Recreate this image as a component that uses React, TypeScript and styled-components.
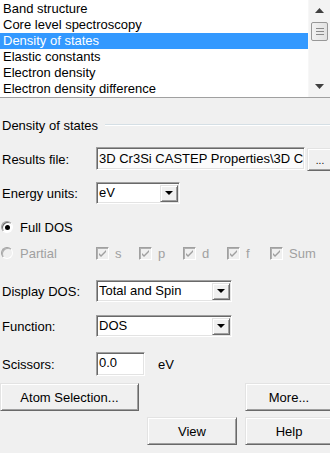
import styled, { createGlobalStyle } from "styled-components";

const GlobalStyle = createGlobalStyle`
  html, body {
    margin: 0;
    padding: 0;
    background: #f0f0f0;
  }
  body {
    font-family: "Liberation Sans", Arial, sans-serif;
    font-size: 13px;
    color: #000;
  }
`;

const Dialog = styled.div`
  width: 330px;
  height: 453px;
  overflow: hidden;
  background: #f0f0f0;
  display: flex;
  flex-direction: column;
`;

const ListBox = styled.div`
  height: 97px;
  border-bottom: 1px solid #a0a0a0;
  background: #fff;
  display: flex;
  flex-shrink: 0;
`;

const ListItems = styled.div`
  flex: 1;
  padding-top: 1px;
`;

const ListItem = styled.div<{ $selected?: boolean }>`
  height: 16px;
  line-height: 16px;
  padding-left: 3px;
  white-space: nowrap;
  background: ${(p) => (p.$selected ? "#3399ff" : "transparent")};
  color: ${(p) => (p.$selected ? "#fff" : "#000")};
`;

const ScrollBar = styled.div`
  width: 21px;
  background: #f3f3f3;
  border-left: 1px solid #f7f7f7;
  display: flex;
  flex-direction: column;
  align-items: center;
`;

const ScrollArrow = styled.div`
  height: 21px;
  width: 17px;
  display: flex;
  align-items: center;
  justify-content: center;
`;

const Thumb = styled.div`
  margin-top: 1px;
  width: 15px;
  height: 17px;
  border: 1px solid #979797;
  border-radius: 2px;
  background: linear-gradient(to right, #f2f2f2, #e2e2e2);
  display: flex;
  flex-direction: column;
  align-items: center;
  justify-content: center;
  gap: 2px;
`;

const Grip = styled.span`
  width: 8px;
  height: 1px;
  background: #8a8a8a;
`;

const Track = styled.div`
  flex: 1;
`;

const GroupHeader = styled.div`
  margin-top: 19px;
  height: 16px;
  display: flex;
  align-items: center;
  padding-left: 2px;
  white-space: nowrap;
  &::after {
    content: "";
    flex: 1;
    height: 1px;
    margin-left: 7px;
    background: #d5dfe5;
    border-bottom: 1px solid #fff;
  }
`;

const Row = styled.div<{ $top: number; $height: number }>`
  margin-top: ${(p) => p.$top}px;
  height: ${(p) => p.$height}px;
  display: flex;
  align-items: center;
  white-space: nowrap;
  flex-shrink: 0;
`;

const Label = styled.span`
  width: 94px;
  padding-left: 2px;
  flex-shrink: 0;
`;

const Sunken = styled.div<{ $width: number; $height: number; $bg?: string }>`
  box-sizing: border-box;
  width: ${(p) => p.$width}px;
  height: ${(p) => p.$height}px;
  border: 1px solid;
  border-color: #a0a0a0 #fff #fff #a0a0a0;
  box-shadow: inset 1px 1px 0 #696969, inset -1px -1px 0 #e3e3e3;
  background: ${(p) => p.$bg ?? "#fff"};
  display: flex;
  align-items: center;
  padding-left: 2px;
  overflow: hidden;
  flex-shrink: 0;
`;

const FieldText = styled.span`
  flex: 1;
  overflow: hidden;
  white-space: nowrap;
  line-height: 16px;
`;

const DropButton = styled.div`
  box-sizing: border-box;
  width: 18px;
  height: 17px;
  margin-right: 1px;
  background: #f0f0f0;
  border: 1px solid;
  border-color: #e3e3e3 #696969 #696969 #e3e3e3;
  box-shadow: inset 1px 1px 0 #fff, inset -1px -1px 0 #a0a0a0;
  display: flex;
  align-items: center;
  justify-content: center;
  flex-shrink: 0;
`;

const Triangle = styled.span`
  width: 0;
  height: 0;
  border-left: 4px solid transparent;
  border-right: 4px solid transparent;
  border-top: 4px solid #000;
`;

const Button = styled.div<{ $width: number; $height: number }>`
  box-sizing: border-box;
  width: ${(p) => p.$width}px;
  height: ${(p) => p.$height}px;
  background: #f0f0f0;
  border: 1px solid;
  border-color: #e3e3e3 #696969 #696969 #e3e3e3;
  box-shadow: inset 1px 1px 0 #fff, inset -1px -1px 0 #a0a0a0;
  display: flex;
  align-items: center;
  justify-content: center;
  flex-shrink: 0;
`;

const BrowseButton = styled(Button)`
  margin-left: 2px;
  align-self: flex-end;
  align-items: flex-end;
  padding-bottom: 4px;
  font-size: 10px;
  line-height: 10px;
`;

const Radio = styled.span<{ $disabled?: boolean }>`
  box-sizing: border-box;
  width: 12px;
  height: 12px;
  margin-left: 1px;
  border-radius: 50%;
  border: 1px solid;
  border-color: #a0a0a0 #fff #fff #a0a0a0;
  box-shadow: inset 1px 1px 0 ${(p) => (p.$disabled ? "#b0b0b0" : "#696969")};
  background: ${(p) => (p.$disabled ? "#f0f0f0" : "#fff")};
  display: flex;
  align-items: center;
  justify-content: center;
  flex-shrink: 0;
`;

const RadioDot = styled.span`
  width: 5px;
  height: 5px;
  border-radius: 50%;
  background: #000;
`;

const OptionText = styled.span<{ $disabled?: boolean }>`
  color: ${(p) => (p.$disabled ? "#a0a0a0" : "#000")};
`;

const RadioLabel = styled(OptionText)`
  margin-left: 7px;
  width: 76px;
`;

const CheckGroup = styled.div`
  display: flex;
  align-items: center;
`;

const CheckItem = styled.div<{ $width: number }>`
  width: ${(p) => p.$width}px;
  display: flex;
  align-items: center;
  gap: 6px;
`;

const CheckBox = styled.span`
  box-sizing: border-box;
  width: 13px;
  height: 13px;
  border: 1px solid;
  border-color: #a0a0a0 #fff #fff #a0a0a0;
  box-shadow: inset 1px 1px 0 #b0b0b0;
  background: #f0f0f0;
  display: flex;
  align-items: center;
  justify-content: center;
`;

const ScissorsText = styled(FieldText)`
  align-self: flex-start;
  margin-top: 2px;
`;

const Unit = styled.span`
  margin-left: 13px;
`;

const ButtonRow = styled.div<{ $top: number; $justify: string }>`
  margin-top: ${(p) => p.$top}px;
  width: 333px;
  display: flex;
  justify-content: ${(p) => p.$justify};
  gap: 8px;
  flex-shrink: 0;
`;

const Check = () => (
  <svg width="7" height="7" viewBox="0 0 7 7">
    <path d="M0 3 L2 5 L7 0 L7 2 L2 7 L0 5 Z" fill="#a0a0a0" />
  </svg>
);

const Arrow = ({ up }: { up?: boolean }) => (
  <svg width="9" height="5" viewBox="0 0 9 5">
    <path d={up ? "M0 5 L4.5 0 L9 5 Z" : "M0 0 L4.5 5 L9 0 Z"} fill="#404040" />
  </svg>
);

const Select = ({ width, value }: { width: number; value: string }) => (
  <Sunken $width={width} $height={22}>
    <FieldText>{value}</FieldText>
    <DropButton>
      <Triangle />
    </DropButton>
  </Sunken>
);

const items = [
  "Band structure",
  "Core level spectroscopy",
  "Density of states",
  "Elastic constants",
  "Electron density",
  "Electron density difference",
];

const orbitals = [
  { name: "s", width: 43 },
  { name: "p", width: 44 },
  { name: "d", width: 44 },
  { name: "f", width: 43 },
  { name: "Sum", width: 50 },
];

export default function App() {
  return (
    <Dialog>
      <GlobalStyle />
      <ListBox>
        <ListItems>
          {items.map((it) => (
            <ListItem key={it} $selected={it === "Density of states"}>
              {it}
            </ListItem>
          ))}
        </ListItems>
        <ScrollBar>
          <ScrollArrow>
            <Arrow up />
          </ScrollArrow>
          <Thumb>
            <Grip />
            <Grip />
            <Grip />
          </Thumb>
          <Track />
          <ScrollArrow>
            <Arrow />
          </ScrollArrow>
        </ScrollBar>
      </ListBox>

      <GroupHeader>Density of states</GroupHeader>

      <Row $top={14} $height={24}>
        <Label>Results file:</Label>
        <Sunken $width={209} $height={23} $bg="#fbfbfb" style={{ alignSelf: "flex-start" }}>
          <FieldText>3D Cr3Si CASTEP Properties\3D C</FieldText>
        </Sunken>
        <BrowseButton $width={26} $height={23}>...</BrowseButton>
      </Row>

      <Row $top={11} $height={22}>
        <Label>Energy units:</Label>
        <Select width={84} value="eV" />
      </Row>

      <Row $top={15} $height={16}>
        <Radio>
          <RadioDot />
        </Radio>
        <RadioLabel>Full DOS</RadioLabel>
      </Row>

      <Row $top={10} $height={16}>
        <Radio $disabled />
        <RadioLabel $disabled>Partial</RadioLabel>
        <CheckGroup>
          {orbitals.map((o) => (
            <CheckItem key={o.name} $width={o.width}>
              <CheckBox>
                <Check />
              </CheckBox>
              <OptionText $disabled>{o.name}</OptionText>
            </CheckItem>
          ))}
        </CheckGroup>
      </Row>

      <Row $top={19} $height={22}>
        <Label>Display DOS:</Label>
        <Select width={136} value="Total and Spin" />
      </Row>

      <Row $top={13} $height={22}>
        <Label>Function:</Label>
        <Select width={136} value="DOS" />
      </Row>

      <Row $top={15} $height={24}>
        <Label>Scissors:</Label>
        <Sunken $width={49} $height={24}>
          <ScissorsText>0.0</ScissorsText>
        </Sunken>
        <Unit>eV</Unit>
      </Row>

      <ButtonRow $top={7} $justify="space-between">
        <Button $width={139} $height={28}>Atom Selection...</Button>
        <Button $width={88} $height={28}>More...</Button>
      </ButtonRow>

      <ButtonRow $top={6} $justify="flex-end">
        <Button $width={90} $height={28}>View</Button>
        <Button $width={88} $height={28}>Help</Button>
      </ButtonRow>
    </Dialog>
  );
}
